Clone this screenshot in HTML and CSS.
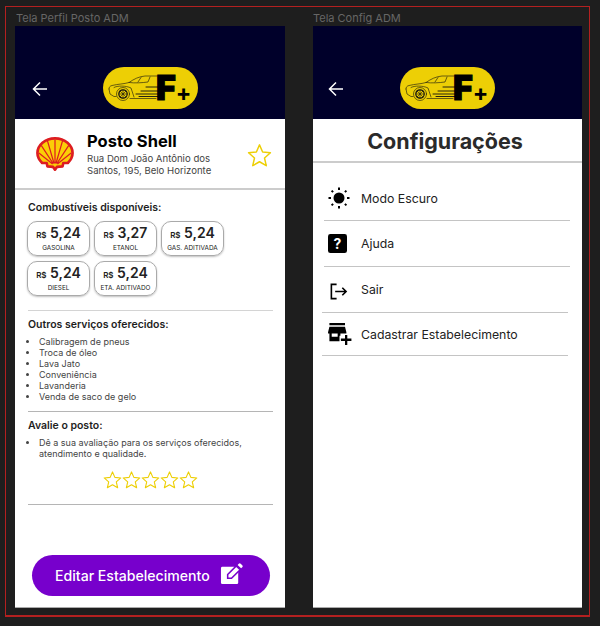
FILE: index.html

```html
<!DOCTYPE html>
<html lang="pt-BR">
<head>
  <meta charset="UTF-8" />
  <title>Telas ADM</title>
  <meta name="viewport" content="width=device-width, initial-scale=1.0" />
  <link rel="stylesheet" href="styles.css">
</head>
<body>
  <svg class="defs" width="0" height="0">
    <symbol id="star" viewBox="0 0 24 24">
      <path d="M12 1.800l3 6.900 7.500.7-5.700 5 1.700 7.400L12 18l-6.500 3.800 1.700-7.400-5.700-5 7.500-.7z" fill="none" stroke="currentColor" stroke-width="1.400" stroke-linejoin="round"/>
    </symbol>
    <symbol id="car" viewBox="0 0 52 27">
      <g fill="none" stroke="#111" stroke-width=".6" stroke-linecap="round" stroke-linejoin="round">
        <path d="M1 14c0-2 1-3 3-3.500 6-1.500 12-1.500 17-3C26 4 31 1.500 37 1h12"/>
        <path d="M1 14l1 5 4 2.500h2M22 23.500h26"/>
        <path d="M21 7.500c6 .8 13 .3 19-.5l2-5M30 7l3-4.500"/>
        <circle cx="15" cy="19" r="6.500"/>
        <circle cx="15" cy="19" r="4.200" stroke-width="1.200"/>
        <path d="M15 15v8M11 19h8M12.200 16.200l5.600 5.600M17.800 16.200l-5.600 5.600"/>
        <path d="M6 12.500c3-2 12-2 17 .5l3 9"/>
        <path d="M38 12h12M33 16h18M28 19h23M31 21.500h20" stroke-width=".9"/>
      </g>
    </symbol>
  </svg>

  <div class="canvas">
    <div class="col col-left">
      <div class="frame-name">Tela Perfil Posto ADM</div>
      <div class="screen">
        <div class="top-bar">
          <svg class="back" viewBox="0 0 16 16"><path d="M15 8H2M8 1.500L1.500 8 8 14.500" fill="none" stroke="#fff" stroke-width="1.500"/></svg>
          <div class="logo">
            <svg class="logo-car"><use href="#car"/></svg>
            <span class="logo-f">F</span>
            <span class="logo-plus">+</span>
          </div>
        </div>

        <div class="station">
          <svg class="shell" viewBox="0 0 40 36">
            <path d="M20 1.500C9.500 1.500 1.500 9 1.500 17c0 4 2 7.500 5 10.500h4.800l.7 3.500 6 .6L20 34.500l2-2.900 6-.6.7-3.500h4.800c3-3 5-6.500 5-10.500 0-8-8-15.500-18.500-15.500z" fill="#fbce07" stroke="#dd1d21" stroke-width="2.800" stroke-linejoin="round"/>
            <path d="M20 28V3M19 28L12 4M21 28l7-24M18 28L5.500 9M22 28L34.500 9M17.500 28.500L3 17M22.500 28.500L37 17" stroke="#dd1d21" stroke-width="1.300"/>
          </svg>
          <div class="station-info">
            <h1>Posto Shell</h1>
            <p>Rua Dom João Antônio dos Santos, 195, Belo Horizonte</p>
          </div>
          <svg class="fav"><use href="#star"/></svg>
        </div>

        <div class="content">
          <section class="block block-fuel">
            <h2>Combustíveis disponíveis:</h2>
            <div class="fuels">
              <div class="fuel"><div class="price"><small>R$</small> 5,24</div><div class="fuel-name">GASOLINA</div></div>
              <div class="fuel"><div class="price"><small>R$</small> 3,27</div><div class="fuel-name">ETANOL</div></div>
              <div class="fuel"><div class="price"><small>R$</small> 5,24</div><div class="fuel-name">GAS. ADITIVADA</div></div>
              <div class="fuel"><div class="price"><small>R$</small> 5,24</div><div class="fuel-name">DIESEL</div></div>
              <div class="fuel"><div class="price"><small>R$</small> 5,24</div><div class="fuel-name">ETA. ADITIVADO</div></div>
            </div>
          </section>

          <section class="block block-services">
            <h2>Outros serviços oferecidos:</h2>
            <ul>
              <li>Calibragem de pneus</li>
              <li>Troca de óleo</li>
              <li>Lava Jato</li>
              <li>Conveniência</li>
              <li>Lavanderia</li>
              <li>Venda de saco de gelo</li>
            </ul>
          </section>

          <section class="block block-rate">
            <h2>Avalie o posto:</h2>
            <ul>
              <li>Dê a sua avaliação para os serviços oferecidos, atendimento e qualidade.</li>
            </ul>
            <div class="stars">
              <svg><use href="#star"/></svg>
              <svg><use href="#star"/></svg>
              <svg><use href="#star"/></svg>
              <svg><use href="#star"/></svg>
              <svg><use href="#star"/></svg>
            </div>
          </section>
        </div>

        <button class="edit-btn">
          Editar Estabelecimento
          <svg viewBox="0 0 24 24">
            <path d="M2.500 4H15l4 4v12.500a1.500 1.500 0 0 1-1.500 1.500h-15A1.500 1.500 0 0 1 1 20.500v-15A1.500 1.500 0 0 1 2.500 4z" fill="#fff"/>
            <path d="M8 12l9-9 4 4-9 9H8z" fill="#fff" stroke="#7700cc" stroke-width="1.600"/>
            <path d="M18.400 2l1.200-1.200a1.400 1.400 0 0 1 2 0l1.600 1.600a1.400 1.400 0 0 1 0 2L22 5.600z" fill="#fff"/>
          </svg>
        </button>
      </div>
    </div>

    <div class="col col-right">
      <div class="frame-name">Tela Config ADM</div>
      <div class="screen">
        <div class="top-bar">
          <svg class="back" viewBox="0 0 16 16"><path d="M15 8H2M8 1.500L1.500 8 8 14.500" fill="none" stroke="#fff" stroke-width="1.500"/></svg>
          <div class="logo">
            <svg class="logo-car"><use href="#car"/></svg>
            <span class="logo-f">F</span>
            <span class="logo-plus">+</span>
          </div>
        </div>

        <div class="config-title">Configurações</div>

        <div class="menu">
          <div class="menu-row row-dark">
            <svg viewBox="0 0 22 22"><circle cx="11" cy="11" r="5.500" fill="#000"/><path d="M11 .5v2.500M11 19v2.500M.5 11H3M19 11h2.500M3.600 3.600l1.500 1.500M16.900 16.900l1.500 1.500M3.600 18.400l1.500-1.500M16.900 5.100l1.500-1.500" stroke="#000" stroke-width="2"/></svg>
            Modo Escuro
          </div>
          <div class="menu-row row-help">
            <svg viewBox="0 0 20 20"><rect x="0" y="0" width="20" height="20" rx="2.500" fill="#000"/></svg>
            <span class="help-mark">?</span>
            Ajuda
          </div>
          <div class="menu-row row-exit">
            <svg viewBox="0 0 20 20"><path d="M8 2.500H2.500v15H8" fill="none" stroke="#000" stroke-width="1.700"/><path d="M6.500 10H18M14 6l4 4-4 4" fill="none" stroke="#000" stroke-width="1.700"/></svg>
            Sair
          </div>
          <div class="menu-row row-store">
            <svg viewBox="0 0 26 24"><path d="M2 0h17v2.500H2zM2 4h17l1.500 6v1.500H.5V10z" fill="#000"/><path d="M2 11h2.500v4H11v-4h3v3h-1v6H2z" fill="#000"/><path d="M19 13h2.500v4H26v2.500h-4.500V24H19v-4.500h-4.500V17H19z" fill="#000"/></svg>
            Cadastrar Estabelecimento
          </div>
        </div>
      </div>
    </div>
  </div>
</body>
</html>
```

FILE: styles.css

```css
html, body {
  margin: 0;
  padding: 0;
  background: #1e1e1e;
  font-family: "Inter", "Liberation Sans", sans-serif;
}
.defs {
  display: block;
  height: 0;
}
.canvas {
  box-sizing: border-box;
  width: 585px;
  height: 611px;
  margin: 6px 0 0 5px;
  padding: 0 0 8px 9px;
  border: 1px solid #b32020;
  border-width: 1px 1px 2px 1px;
  display: flex;
  overflow: hidden;
}
.col {
  width: 270px;
  display: flex;
  flex-direction: column;
}
.col-right {
  width: 269px;
  margin-left: 28px;
}
.frame-name {
  height: 19px;
  font-size: 11px;
  line-height: 22px;
  color: #666;
}
.col-left .frame-name {
  padding-left: 1px;
}
.screen {
  flex: 1;
  background: #fff;
  display: flex;
  flex-direction: column;
  box-shadow: 0 1px 0 #aaa;
}
.top-bar {
  height: 93px;
  flex-shrink: 0;
  box-sizing: border-box;
  background: #00002a;
  padding: 41px 0 0 17px;
  display: flex;
  align-items: flex-start;
}
.col-right .top-bar {
  padding-left: 15px;
}
.back {
  width: 16px;
  height: 16px;
  margin-top: 14px;
}
.logo {
  position: relative;
  box-sizing: border-box;
  width: 95px;
  height: 42px;
  margin-left: 55px;
  padding-left: 53px;
  background: #edcf05;
  border-radius: 21px;
  display: flex;
  align-items: flex-start;
  color: #000;
}
.col-right .logo {
  margin-left: 56px;
}
.logo-car {
  position: absolute;
  left: 5px;
  top: 8px;
  width: 52px;
  height: 27px;
}
.logo-f {
  position: relative;
  margin-top: 4px;
  font-size: 34px;
  line-height: 34px;
  font-weight: 900;
  -webkit-text-stroke: 1px #000;
}
.logo-plus {
  margin-top: 15px;
  font-size: 23px;
  line-height: 22px;
  font-weight: 700;
}
.station {
  height: 71px;
  flex-shrink: 0;
  box-sizing: border-box;
  border-bottom: 2px solid #ccc;
  padding: 0 13px 0 21px;
  display: flex;
  align-items: center;
}
.shell {
  width: 38px;
  height: 36px;
  margin: 0 13px 0 0;
  flex-shrink: 0;
}
.station-info {
  flex: 1;
}
.station-info h1 {
  margin: 0 0 1px;
  font-size: 16.500px;
  line-height: 21px;
  font-weight: 700;
  color: #000;
}
.station-info p {
  margin: 0;
  max-width: 135px;
  font-size: 9.600px;
  line-height: 12px;
  color: #444;
}
.fav {
  width: 25px;
  height: 25px;
  margin-top: 4px;
  color: #edcf05;
  flex-shrink: 0;
}
.content {
  padding: 0 12px 0 13px;
}
.block {
  border-bottom: 1px solid #b5b5b5;
}
.block h2 {
  margin: 0;
  font-size: 10.500px;
  line-height: 14px;
  font-weight: 600;
  color: #1e1e1e;
}
.block-fuel {
  height: 121px;
  padding-top: 11px;
  box-sizing: border-box;
  border-bottom-color: #d4d4d4;
}
.fuels {
  display: flex;
  flex-wrap: wrap;
  gap: 5px 4px;
  margin-top: 6px;
  margin-left: -1px;
  width: 205px;
}
.fuel {
  box-sizing: border-box;
  width: 63px;
  height: 35px;
  padding-top: 1px;
  border: 1px solid #aaa;
  border-radius: 10px;
  box-shadow: 0 1px 2px rgba(0, 0, 0, 0.25);
  text-align: center;
}
.price {
  font-size: 14px;
  line-height: 19px;
  font-weight: 600;
  color: #222;
}
.price small {
  font-size: 8px;
  font-weight: 600;
}
.fuel-name {
  margin-top: -1px;
  font-size: 6.400px;
  line-height: 9px;
  color: #222;
  white-space: nowrap;
}
.block ul {
  margin: 4px 0 0;
  padding: 0 0 0 11px;
}
.block li {
  font-size: 9px;
  line-height: 11px;
  color: #444;
}
.block-services {
  height: 101px;
  box-sizing: border-box;
  padding-top: 7px;
}
.block-rate {
  height: 93px;
  box-sizing: border-box;
  padding-top: 7px;
}
.stars {
  display: flex;
  justify-content: center;
  margin: 11px 0 0 -1px;
}
.stars svg {
  width: 19px;
  height: 20px;
  color: #edcf05;
}
.edit-btn {
  width: 238px;
  height: 41px;
  margin: 50px 0 0 17px;
  padding: 0 0 0 23px;
  border: none;
  border-radius: 21px;
  background: #7700cc;
  color: #fff;
  font-family: inherit;
  font-size: 14.100px;
  font-weight: 500;
  display: flex;
  align-items: center;
}
.edit-btn svg {
  width: 23px;
  height: 23px;
  margin: -3px 0 0 10px;
}
.config-title {
  height: 44px;
  box-sizing: border-box;
  border-bottom: 2px solid #ccc;
  padding-right: 5px;
  text-align: center;
  font-size: 21.500px;
  line-height: 44px;
  font-weight: 700;
  color: #2a2a2a;
}
.menu {
  padding: 0 12px 0 11px;
}
.menu-row {
  position: relative;
  display: flex;
  align-items: center;
  box-sizing: border-box;
  border-bottom: 1px solid #c4c4c4;
  font-size: 12.300px;
  color: #222;
}
.row-dark {
  height: 58px;
  padding: 14px 0 0 4px;
}
.row-dark svg {
  width: 22px;
  height: 22px;
  margin: -2px 11px 0 0;
}
.row-help {
  height: 46px;
  padding-left: 4px;
}
.row-help svg {
  width: 19px;
  height: 19px;
  margin-right: 14px;
}
.help-mark {
  position: absolute;
  left: 4px;
  width: 19px;
  text-align: center;
  color: #fff;
  font-size: 14px;
  font-weight: 700;
}
.row-exit {
  height: 46px;
  margin: 0 2px 0 -2px;
  padding-left: 7px;
}
.row-exit svg {
  width: 19px;
  height: 19px;
  margin: 3px 13px 0 0;
}
.row-store {
  height: 43px;
  margin: 0 2px 0 -2px;
  padding-left: 5px;
}
.row-store svg {
  width: 25px;
  height: 22px;
  margin-right: 9px;
}
```
